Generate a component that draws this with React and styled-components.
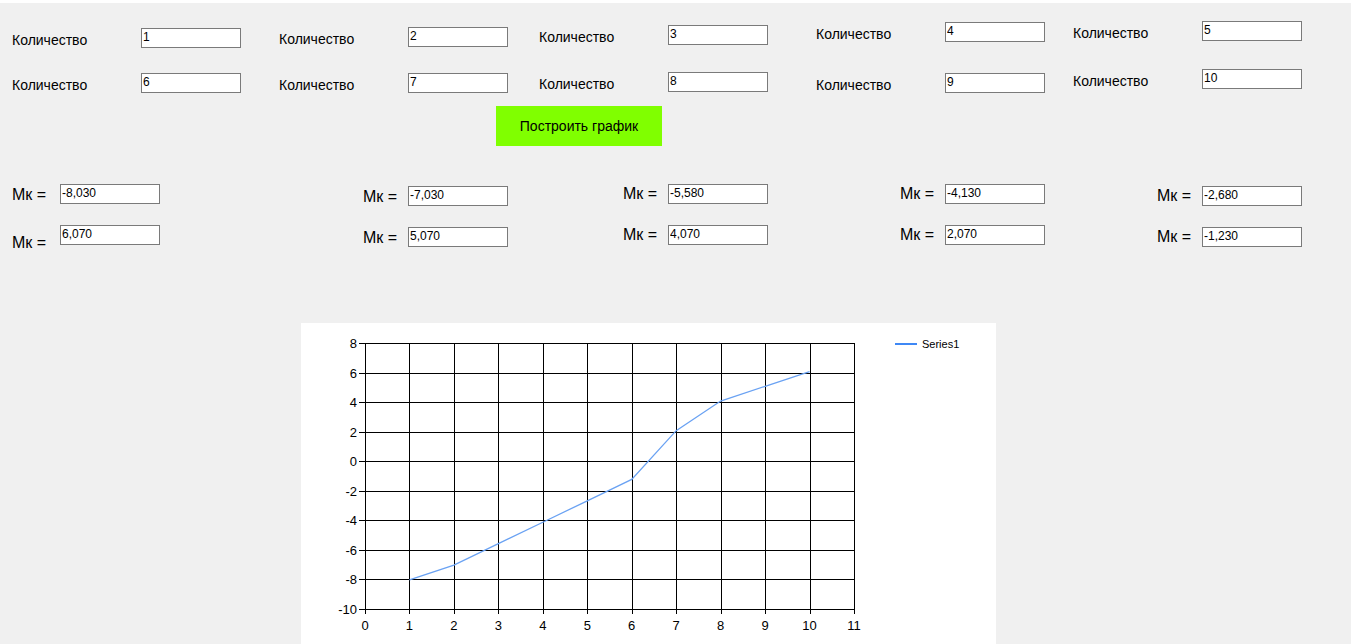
import React from 'react';
import styled, { createGlobalStyle } from 'styled-components';

const GlobalStyle = createGlobalStyle`
  html, body {
    margin: 0;
    padding: 0;
    height: 100%;
    overflow: hidden;
    background: #ffffff;
  }
  body {
    font-family: "Liberation Sans", Arial, sans-serif;
    color: #000;
  }
`;

// top block: one column per pair of "Количество" fields
const countColumns = [
  { top: 25, gap: 25 },
  { top: 24, gap: 26 },
  { top: 22, gap: 27 },
  { top: 19, gap: 31 },
  { top: 18, gap: 28 },
];

const mkColumns = [
  { top: 38, indent: 0, labelWidth: 48, values: ['-8,030', '6,070'], drops: [2, 9] },
  { top: 40, indent: 84, labelWidth: 45, values: ['-7,030', '5,070'], drops: [2, 2] },
  { top: 38, indent: 84, labelWidth: 45, values: ['-5,580', '4,070'], drops: [1, 1] },
  { top: 38, indent: 84, labelWidth: 45, values: ['-4,130', '2,070'], drops: [1, 1] },
  { top: 40, indent: 84, labelWidth: 45, values: ['-2,680', '-1,230'], drops: [1, 1] },
];

const series = [-8.03, -7.03, -5.58, -4.13, -2.68, -1.23, 2.07, 4.07, 5.07, 6.07];

const PLOT = { left: 64, right: 553, top: 20, bottom: 286 };
const px = (u) => PLOT.left + (u / 11) * (PLOT.right - PLOT.left);
const py = (v) => PLOT.top + ((8 - v) / 18) * (PLOT.bottom - PLOT.top);
const crisp = (n) => Math.round(n) + 0.5;

function Chart() {
  const xs = Array.from({ length: 12 }, (_, i) => i);
  const ys = Array.from({ length: 10 }, (_, i) => 8 - i * 2);
  const points = series.map((v, i) => `${px(i + 1)},${py(v)}`).join(' ');

  return (
    <svg width="695" height="321" viewBox="0 0 695 321">
      <g stroke="#000" strokeWidth="1" shapeRendering="crispEdges">
        {xs.map((u) => (
          <line key={`v${u}`} x1={crisp(px(u))} x2={crisp(px(u))} y1={crisp(PLOT.top)} y2={crisp(PLOT.bottom) + 4} />
        ))}
        {ys.map((v) => (
          <line key={`h${v}`} x1={crisp(PLOT.left) - 7} x2={crisp(PLOT.right)} y1={crisp(py(v))} y2={crisp(py(v))} />
        ))}
      </g>
      <g fontFamily='"Liberation Sans", Arial, sans-serif' fontSize="13" fill="#000">
        {ys.map((v) => (
          <text key={`yl${v}`} x="56" y={py(v) + 5} textAnchor="end">{v}</text>
        ))}
        {xs.map((u) => (
          <text key={`xl${u}`} x={px(u)} y="307" textAnchor="middle">{u}</text>
        ))}
      </g>
      <polyline points={points} fill="none" stroke="#6aa2f3" strokeWidth="1.3" />
      <line x1="594" x2="616" y1="21" y2="21" stroke="#3f88f5" strokeWidth="2" />
      <text x="621" y="25" fontFamily='"Liberation Sans", Arial, sans-serif' fontSize="11" fill="#000">
        Series1
      </text>
    </svg>
  );
}

function App() {
  return (
    <>
      <GlobalStyle />
      <Form>
        <Columns>
          {countColumns.map((col, i) => (
            <Column key={i} $top={col.top} $gap={col.gap}>
              {[i + 1, i + 6].map((n) => (
                <Field key={n}>
                  <CountLabel>Количество</CountLabel>
                  <TextBox readOnly value={String(n)} />
                </Field>
              ))}
            </Column>
          ))}
        </Columns>

        <ButtonRow>
          <PlotButton type="button">Построить график</PlotButton>
        </ButtonRow>

        <MkSection>
          <Columns>
            {mkColumns.map((col, i) => (
              <Column key={i} $top={col.top} $gap={21}>
                {col.values.map((val, j) => (
                  <Field key={val} $indent={col.indent}>
                    <MkLabel $width={col.labelWidth} $drop={col.drops[j]}>Мк =</MkLabel>
                    <TextBox readOnly value={val} />
                  </Field>
                ))}
              </Column>
            ))}
          </Columns>
        </MkSection>

        <ChartPanel>
          <Chart />
        </ChartPanel>
      </Form>
    </>
  );
}

const Form = styled.div`
  margin-top: 3px;
  height: 641px;
  background: #f0f0f0;
  overflow: hidden;
`;

const Columns = styled.div`
  display: grid;
  grid-template-columns: 267px 260px 277px 257px 1fr;
  align-items: start;
  padding-left: 12px;
`;

const Column = styled.div`
  display: flex;
  flex-direction: column;
  padding-top: ${(p) => p.$top}px;
  gap: ${(p) => p.$gap}px;
`;

const Field = styled.div`
  display: flex;
  align-items: flex-start;
  height: 20px;
  padding-left: ${(p) => p.$indent || 0}px;
`;

const CountLabel = styled.span`
  width: 129px;
  margin-top: 4px;
  font-size: 14px;
  line-height: 16px;
  white-space: nowrap;
`;

const MkLabel = styled.span`
  width: ${(p) => p.$width}px;
  margin-top: ${(p) => p.$drop}px;
  font-size: 16px;
  line-height: 18px;
  white-space: nowrap;
`;

const TextBox = styled.input`
  box-sizing: border-box;
  width: 100px;
  height: 20px;
  margin: 0;
  padding: 0 1px 2px;
  border: 1px solid #7a7a7a;
  border-radius: 0;
  background: #fff;
  font-family: "Liberation Sans", Arial, sans-serif;
  font-size: 12px;
  color: #000;
  outline: none;
`;

const ButtonRow = styled.div`
  display: flex;
  margin-top: 13px;
  padding-left: 496px;
`;

const PlotButton = styled.button`
  width: 166px;
  height: 40px;
  margin: 0;
  padding: 0;
  border: none;
  background: #80ff00;
  font-family: "Liberation Sans", Arial, sans-serif;
  font-size: 14px;
  color: #000;
`;

const MkSection = styled.div`
  height: 101px;
`;

const ChartPanel = styled.div`
  display: flex;
  margin-top: 76px;
  margin-left: 301px;
  width: 695px;
  height: 321px;
  background: #fff;
`;

export default App;
